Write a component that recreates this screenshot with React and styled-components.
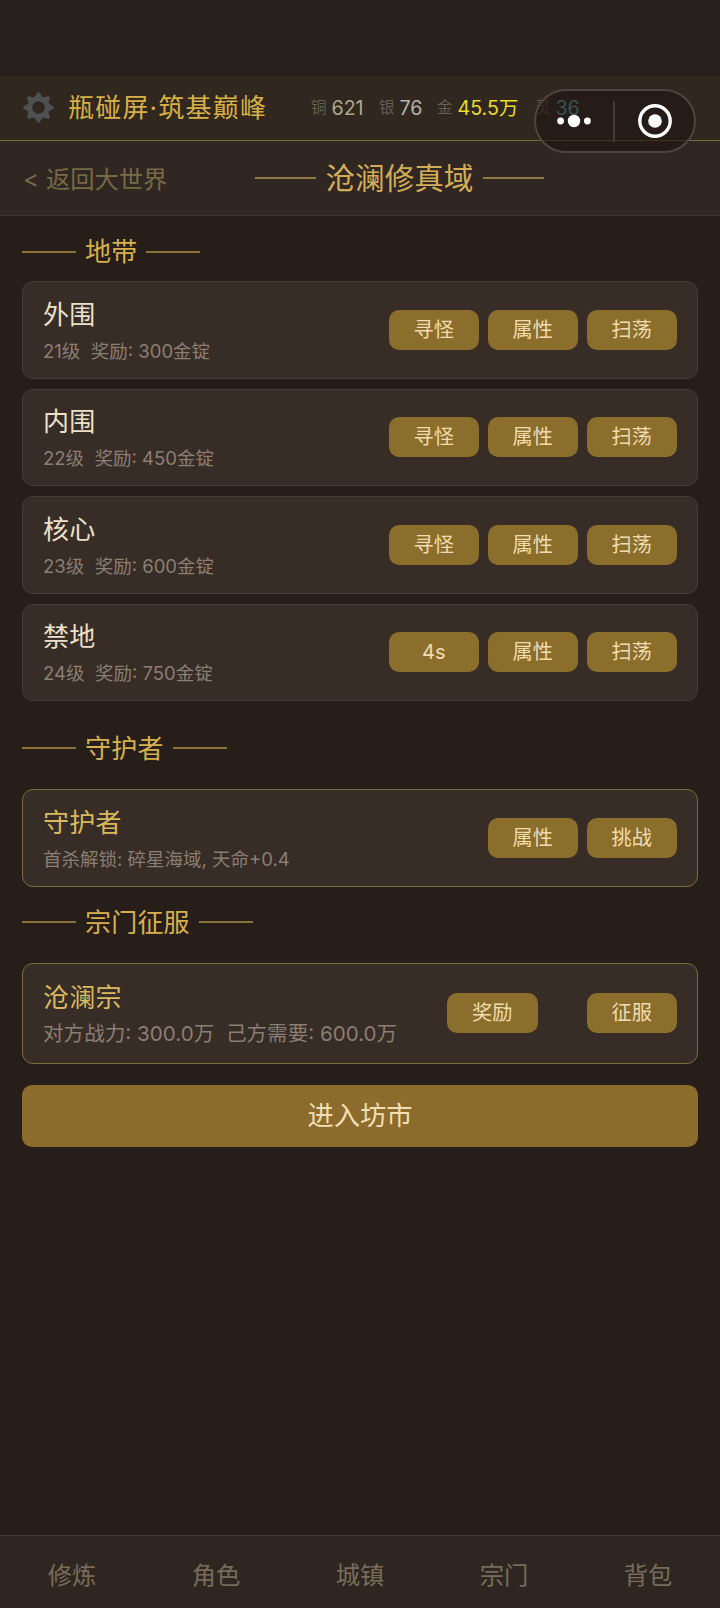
import React from "react";
import styled, { createGlobalStyle } from "styled-components";

const currencies = [
  { label: "铜", value: "621", color: "#b5a78c", width: 68 },
  { label: "银", value: "76", color: "#b9b2ab", width: 58 },
  { label: "金", value: "45.5万", color: "#eadb2c", width: 98 },
  { label: "灵", value: "36", color: "#5cc0c0", width: 60 },
];

const zones = [
  { name: "外围", level: 21, reward: 300, actions: ["寻怪", "属性", "扫荡"] },
  { name: "内围", level: 22, reward: 450, actions: ["寻怪", "属性", "扫荡"] },
  { name: "核心", level: 23, reward: 600, actions: ["寻怪", "属性", "扫荡"] },
  { name: "禁地", level: 24, reward: 750, actions: ["4s", "属性", "扫荡"] },
];

const tabs = ["修炼", "角色", "城镇", "宗门", "背包"];

export default function App() {
  return (
    <Page>
      <GlobalStyle />
      <StatusBar />

      <Header>
        <GearIcon />
        <Player>瓶碰屏·筑基巅峰</Player>
        <Wallet>
          {currencies.map((c) => (
            <Currency key={c.label} $color={c.color} $width={c.width}>
              <span>{c.label}</span>
              <b>{c.value}</b>
            </Currency>
          ))}
        </Wallet>
        <CapsuleMenu />
      </Header>

      <SubHeader>
        <Back>&lt; 返回大世界</Back>
        <RegionTitle>沧澜修真域</RegionTitle>
      </SubHeader>

      <Content>
        <SectionTitle $height={65} $top={6}>
          <span>地带</span>
        </SectionTitle>
        <ZoneList>
          {zones.map((z) => (
            <Card key={z.name}>
              <Info>
                <Name>{z.name}</Name>
                <Desc>
                  {z.level}级{"  "}奖励: {z.reward}金锭
                </Desc>
              </Info>
              <Actions>
                {z.actions.map((a) => (
                  <ActionButton key={a}>{a}</ActionButton>
                ))}
              </Actions>
            </Card>
          ))}
        </ZoneList>

        <SectionTitle $height={88} $top={6}>
          <span>守护者</span>
        </SectionTitle>
        <Card $gold>
          <Info>
            <Name $gold>守护者</Name>
            <Desc>首杀解锁: 碎星海域, 天命+0.4</Desc>
          </Info>
          <Actions>
            <ActionButton>属性</ActionButton>
            <ActionButton>挑战</ActionButton>
          </Actions>
        </Card>

        <SectionTitle $height={76} $bottom={5}>
          <span>宗门征服</span>
        </SectionTitle>
        <Card $gold $height={101}>
          <Info>
            <Name $gold>沧澜宗</Name>
            <Desc $large>
              对方战力: 300.0万{"  "}己方需要: 600.0万
            </Desc>
          </Info>
          <Actions $gap={49}>
            <ActionButton>奖励</ActionButton>
            <ActionButton>征服</ActionButton>
          </Actions>
        </Card>

        <MarketButton>进入坊市</MarketButton>
      </Content>

      <TabBar>
        {tabs.map((t) => (
          <Tab key={t}>{t}</Tab>
        ))}
      </TabBar>
    </Page>
  );
}

function GearIcon() {
  const teeth = [0, 45, 90, 135, 180, 225, 270, 315];
  return (
    <Gear viewBox="-16 -16 32 32">
      <circle r="9" fill="none" stroke="#4d5154" strokeWidth="5" />
      {teeth.map((deg) => (
        <path
          key={deg}
          d="M-3.8 -10.5 L-1.3 -15.6 H1.3 L3.8 -10.5 Z"
          fill="#4d5154"
          transform={`rotate(${deg})`}
        />
      ))}
    </Gear>
  );
}

function CapsuleMenu() {
  return (
    <Capsule>
      <svg width="34" height="14" viewBox="0 0 34 14">
        <circle cx="3.6" cy="7" r="3.4" />
        <circle cx="17" cy="7" r="6.2" />
        <circle cx="30.4" cy="7" r="3.4" />
      </svg>
      <i />
      <svg width="36" height="36" viewBox="0 0 36 36">
        <circle cx="18" cy="18" r="15.2" fill="none" stroke="#fff" strokeWidth="3.4" />
        <circle cx="18" cy="18" r="6.8" />
      </svg>
    </Capsule>
  );
}

const GlobalStyle = createGlobalStyle`
  * {
    box-sizing: border-box;
  }

  body {
    margin: 0;
    background: #271e1a;
  }

  button {
    font: inherit;
    border: 0;
    padding: 0;
  }
`;

const Page = styled.div`
  display: flex;
  flex-direction: column;
  width: 720px;
  height: 1608px;
  overflow: hidden;
  background: #271e1a;
  color: #e9dfd0;
  font-family: "Inter", "Noto Sans CJK SC", sans-serif;
  font-weight: 400;
  white-space: pre;
`;

const StatusBar = styled.div`
  height: 76px;
  flex: none;
  background: #25201d;
`;

const Header = styled.header`
  position: relative;
  display: flex;
  align-items: center;
  height: 65px;
  flex: none;
  padding-left: 23px;
  background: #30271f;
  border-bottom: 1px solid #7c6b2c;
`;

const Gear = styled.svg`
  width: 31px;
  height: 31px;
  flex: none;
  margin-bottom: 2px;
`;

const Player = styled.div`
  width: 243px;
  margin-left: 14px;
  font-size: 26px;
  line-height: 30px;
  letter-spacing: 1.2px;
  color: #d9b046;
`;

const Wallet = styled.div`
  display: flex;
`;

const Currency = styled.div`
  display: flex;
  align-items: center;
  gap: 5px;
  width: ${(p) => p.$width}px;
  flex: none;
  line-height: 24px;

  span {
    font-size: 15.5px;
    color: #675d52;
  }

  b {
    font-size: 19.6px;
    font-weight: 400;
    color: ${(p) => p.$color};
  }
`;

/* floats over the wallet and the header border */
const Capsule = styled.div`
  position: absolute;
  top: 13px;
  right: 24px;
  z-index: 1;
  display: flex;
  align-items: center;
  width: 162px;
  height: 64px;
  padding-left: 21px;
  border: 2px solid #4f443f;
  border-radius: 32px;
  background: rgba(31, 20, 18, 0.64);

  svg {
    flex: none;
    fill: #fff;
  }

  i {
    width: 2px;
    height: 41px;
    margin: 0 22px 0 22px;
    background: #453a36;
  }
`;

const SubHeader = styled.div`
  display: grid;
  grid-template-columns: 232px 1fr;
  align-items: center;
  height: 75px;
  flex: none;
  padding-left: 23px;
  background: #302622;
  border-bottom: 1px solid #413630;
`;

const Back = styled.div`
  font-size: 24.3px;
  line-height: 30px;
  padding-top: 1px;
  color: #776a45;
`;

const RegionTitle = styled.h1`
  display: flex;
  align-items: center;
  gap: 9.5px;
  margin: 0;
  font-size: 29.6px;
  font-weight: 400;
  line-height: 36px;
  color: #d4ae56;

  &::before,
  &::after {
    content: "";
    width: 61px;
    height: 2px;
    background: #917847;
  }
`;

const Content = styled.main`
  display: flex;
  flex-direction: column;
  flex: 1;
  padding: 0 22px;
`;

const SectionTitle = styled.h2`
  display: flex;
  align-items: center;
  gap: 9px;
  height: ${(p) => p.$height}px;
  flex: none;
  margin: 0;
  padding-top: ${(p) => p.$top || 0}px;
  padding-bottom: ${(p) => p.$bottom || 0}px;
  font-size: 26px;
  font-weight: 400;
  letter-spacing: 0.2px;
  color: #d6b04c;

  span {
    padding-bottom: 4px;
  }

  &::before,
  &::after {
    content: "";
    width: 54px;
    height: 2px;
    background: #88733a;
  }
`;

const ZoneList = styled.div`
  display: flex;
  flex-direction: column;
  gap: 10px;
`;

const Card = styled.section`
  display: flex;
  align-items: center;
  justify-content: space-between;
  height: ${(p) => p.$height || 97.5}px;
  flex: none;
  padding: 0 20px;
  border: 1px solid ${(p) => (p.$gold ? "#7a6c3c" : "#473c36")};
  border-radius: 11px;
  background: #372c26;
`;

const Info = styled.div`
  display: flex;
  flex-direction: column;
  gap: 5px;
  padding-top: 3px;
`;

const Name = styled.div`
  font-size: 26px;
  line-height: 34px;
  letter-spacing: 0.3px;
  color: ${(p) => (p.$gold ? "#d9b95e" : "#ece0cb")};
`;

const Desc = styled.div`
  font-size: ${(p) => (p.$large ? 20.6 : 18.5)}px;
  line-height: 28px;
  color: #8b7e74;
`;

const Actions = styled.div`
  display: flex;
  gap: ${(p) => p.$gap || 8.5}px;
`;

const ActionButton = styled.button`
  width: 90.5px;
  height: 40px;
  border-radius: 10px;
  background: #8b6e2b;
  color: #f0dcae;
  font-size: 20.2px;
  line-height: 38px;
`;

const MarketButton = styled.button`
  height: 62px;
  flex: none;
  margin-top: 21px;
  padding-bottom: 4px;
  border-radius: 10px;
  background: #8b6c2d;
  color: #f2dfb4;
  font-size: 26.3px;
`;

const TabBar = styled.nav`
  display: grid;
  grid-template-columns: repeat(5, 1fr);
  align-items: center;
  height: 73px;
  flex: none;
  padding-top: 5px;
  background: #2f2621;
  border-top: 1px solid #433831;
`;

const Tab = styled.div`
  text-align: center;
  font-size: 24.3px;
  line-height: 30px;
  color: #7a6c5a;
`;
